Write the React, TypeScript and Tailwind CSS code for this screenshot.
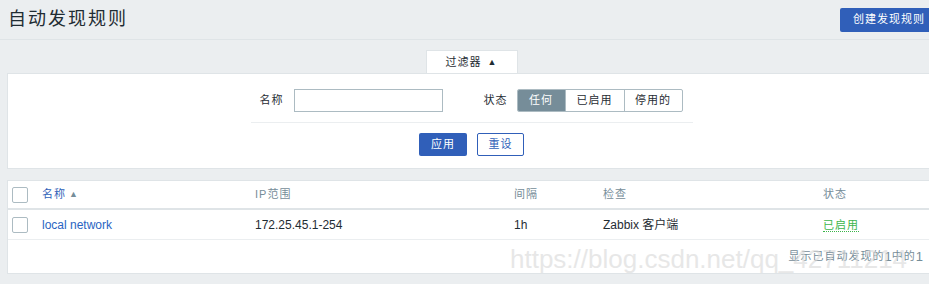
import React from 'react';

const font = "font-['Liberation_Sans','Noto_Sans_CJK_SC',sans-serif]";

function Checkbox() {
    return <span className="block w-4 h-4 border border-[#acbbc2] rounded-[2px] bg-white" />;
}

export default function App() {
    const cols = "grid grid-cols-[30px_212px_259px_89px_220px_1fr] items-center";

    return (
        <div className={`w-[929px] h-[284px] overflow-hidden bg-[#ebeef0] relative ${font}`}>
            <div className="w-[936px]">
                {/* header */}
                <div className="h-[40px] border-b border-[#dfe4e7] flex items-center justify-between pl-2">
                    <h1 className="text-[18px] tracking-[2px] text-[#1f2c33] font-normal">自动发现规则</h1>
                    <button className="h-6 w-[96px] pl-[13px] text-left bg-[#305fb9] text-white text-[11px] tracking-[1px] rounded-[2px]">
                        创建发现规则
                    </button>
                </div>

                {/* filter */}
                <div className="mt-[10px] pl-[7px]">
                    <div className="flex justify-center">
                        <div className="w-[92px] h-[23px] bg-white border border-b-0 border-[#dfe4e7] flex items-center justify-center gap-[6px] text-[11px] tracking-[1px] text-[#1f2c33]">
                            <span>过滤器</span>
                            <span className="text-[9px] leading-none">▲</span>
                        </div>
                    </div>
                    <div className="bg-white border border-[#dfe4e7] pt-[15px] pb-[12px]">
                        <div className="w-[442px] mx-auto">
                            <div className="flex items-center pl-[9px] text-[11px] tracking-[1px] text-[#1f2c33]">
                                <span>名称</span>
                                <input className="ml-[10px] w-[149px] h-[23px] border border-[#acbbc2] bg-white outline-none" />
                                <span className="ml-[41px]">状态</span>
                                <div className="ml-[9px] flex h-[23px] border border-[#acbbc2] rounded-[2px] overflow-hidden">
                                    <span className="w-[47px] flex items-center justify-center bg-[#768d99] text-white">任何</span>
                                    <span className="w-[59px] flex items-center justify-center border-l border-[#acbbc2]">已启用</span>
                                    <span className="w-[58px] flex items-center justify-center border-l border-[#acbbc2]">停用的</span>
                                </div>
                            </div>
                            <div className="mt-[10px] border-t border-[#ebeef0]" />
                            <div className="mt-[10px] flex justify-center gap-[10px] text-[11px] tracking-[1px]">
                                <button className="w-[48px] h-[23px] bg-[#305fb9] text-white rounded-[2px]">应用</button>
                                <button className="w-[47px] h-[23px] bg-white text-[#305fb9] border border-[#305fb9] rounded-[2px]">重设</button>
                            </div>
                        </div>
                    </div>
                </div>

                {/* table */}
                <div className="mt-[11px] ml-[7px] bg-white border border-[#dfe4e7]">
                    <div className={`${cols} h-[29px] border-b-2 border-[#dfe4e7] text-[11px] tracking-[1px] text-[#768d99]`}>
                        <div className="pl-[4px]"><Checkbox /></div>
                        <div className="pl-[4px] text-[#305fb9] flex items-center gap-[3px]">
                            名称<span className="text-[9px] text-[#768d99]">▲</span>
                        </div>
                        <div className="pl-[5px]">IP范围</div>
                        <div className="pl-[5px]">间隔</div>
                        <div className="pl-[5px]">检查</div>
                        <div className="pl-[5px]">状态</div>
                    </div>
                    <div className={`${cols} h-[30px] border-b border-[#ebeef0] text-[12px] text-[#1f2c33]`}>
                        <div className="pl-[4px]"><Checkbox /></div>
                        <div className="pl-[4px] text-[#2a64c2]">local network</div>
                        <div className="pl-[5px]">172.25.45.1-254</div>
                        <div className="pl-[5px]">1h</div>
                        <div className="pl-[5px]">Zabbix 客户端</div>
                        <div className="pl-[5px]">
                            <span className="text-[11px] tracking-[1px] text-[#3cb54b] border-b border-dotted border-[#3cb54b]">已启用</span>
                        </div>
                    </div>
                    <div className="h-[33px] flex items-center justify-end pr-[12px] text-[11px] tracking-[1px] text-[#768d99]">
                        显示已自动发现的<span className="text-[13px] tracking-normal">1</span>中的<span className="text-[13px] tracking-normal">1</span>
                    </div>
                </div>
            </div>

            {/* watermark */}
            <div className="absolute left-[510px] top-[246px] whitespace-nowrap text-[26px] leading-none text-[#d8d8d8] opacity-60 pointer-events-none font-['Liberation_Sans',sans-serif]">
                https://blog.csdn.net/qq_42711214
            </div>
        </div>
    );
}
